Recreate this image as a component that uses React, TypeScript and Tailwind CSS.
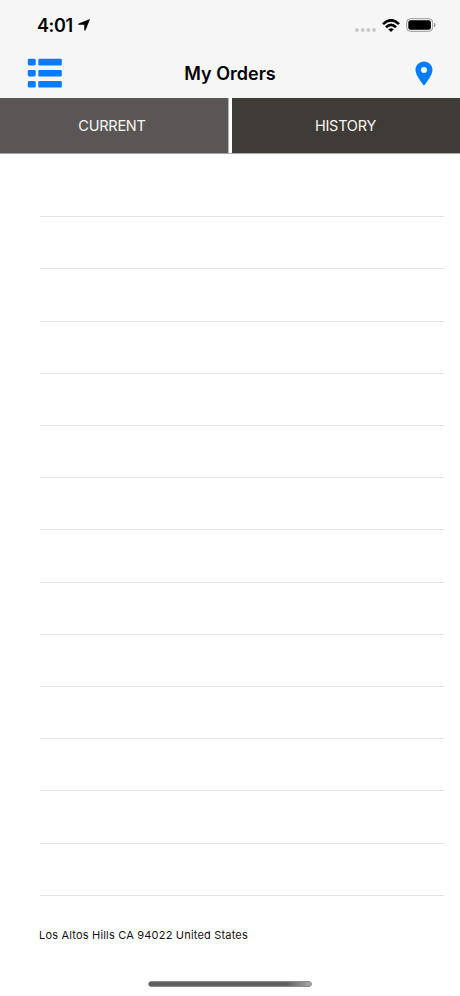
const ROWS = Array.from({ length: 13 }, (_, i) => i);

function StatusBar() {
  return (
    <div className="flex h-[50px] items-center justify-between pl-[37px] pr-6">
      <div className="flex items-center gap-[5px]">
        <span className="pt-[2px] text-[18px] font-semibold leading-[22px] tracking-[-0.4px]">4:01</span>
        <svg className="h-3 w-3" viewBox="0 0 12 12" fill="#000" stroke="#000" strokeWidth="0.5">
          <path d="M11.6.4 7.3 11.2Q6.8 12 6.5 11.1V6Q6.5 5.5 6 5.5H.8Q-.1 5.2.6 4.8Z" />
        </svg>
      </div>
      <div className="flex items-center">
        <svg className="mt-[9px] h-1 w-[21px]" viewBox="0 0 21 4" fill="#c8c7c9">
          <circle cx="2" cy="2" r="1.9" />
          <circle cx="7.7" cy="2" r="1.9" />
          <circle cx="13.3" cy="2" r="1.9" />
          <circle cx="19" cy="2" r="1.9" />
        </svg>
        <svg className="ml-[6px] h-[13px] w-[18px]" viewBox="0 0 18 13" fill="none" stroke="#000" strokeWidth="2.7">
          <path d="M1 5.1Q9-2.6 17 5.1" />
          <path d="M4 8.2Q9 3.5 14 8.2" />
          <path d="M9 13 6.2 10.3Q9 8 11.8 10.3Z" fill="#000" stroke="none" />
        </svg>
        <svg className="ml-[6px] h-[14px] w-[30px]" viewBox="0 0 30 14">
          <rect x="0.7" y="0.7" width="26" height="12.6" rx="3.8" fill="none" stroke="#98979a" />
          <rect x="2.3" y="2.2" width="22.6" height="9.6" rx="2.3" fill="#000" />
          <path d="M28 4.8Q29.6 5.5 29.6 7T28 9.2Z" fill="#98979a" />
        </svg>
      </div>
    </div>
  );
}

function NavBar() {
  return (
    <div className="grid h-[48px] grid-cols-3 items-center">
      <svg className="mb-[2px] ml-[27px] h-[30px] w-[36px]" viewBox="0 0 36 30" fill="#087cff">
        {[0.8, 11.9, 23].map((y) => (
          <g key={y}>
            <rect x="0.8" y={y} width="7.9" height="6.6" rx="1.4" />
            <rect x="11.3" y={y} width="23.5" height="6.6" rx="1.2" />
          </g>
        ))}
      </svg>
      <h1 className="whitespace-nowrap text-center text-[18px] font-semibold leading-6">My Orders</h1>
      <svg className="mb-[2px] mr-[27px] h-[25px] w-[18px] justify-self-end" viewBox="0 0 18 25">
        <path
          fill="#087cff"
          fillRule="evenodd"
          d="M9 .5C4.2.5.5 4.2.5 8.9.5 15 9 24.5 9 24.5S17.5 15 17.5 8.9C17.5 4.2 13.8.5 9 .5ZM9 5.9a3 3 0 1 1 0 6 3 3 0 0 1 0-6Z"
        />
      </svg>
    </div>
  );
}

export default function App() {
  return (
    <div className="flex h-[996px] w-[460px] flex-col overflow-hidden bg-white font-['Inter',sans-serif] text-black">
      <header className="h-[98px] bg-[#f7f6f7]">
        <StatusBar />
        <NavBar />
      </header>
      <div className="flex h-[56px] gap-[3px] border-b border-[#aaa8a7] bg-white text-[14.5px] tracking-[-0.25px] text-[#f8f6f5]">
        <button className="w-[229px] border-r border-[#b5b2b2] bg-[#5b5656] pr-[4px] pt-px">CURRENT</button>
        <button className="w-[228px] bg-[#3f3b37] pr-px pt-px">HISTORY</button>
      </div>
      <main className="ml-[39.5px] mr-[16.5px]">
        <div className="h-[63.3px] border-b border-[#e4e4e4]" />
        {ROWS.map((row) => (
          <div key={row} className="h-[52.2px] border-b border-[#e4e4e4]" />
        ))}
      </main>
      <footer className="flex grow flex-col justify-between pb-[9px] pt-[31px]">
        <p className="pl-[39px] text-[11px] leading-4 tracking-[0.19px] text-[#111]">Los Altos Hills CA 94022 United States</p>
        <div className="ml-[148px] h-[6px] w-[164px] rounded-full border border-[#8c8c8c] bg-linear-to-r from-[#606060] from-85% to-[#aaa]" />
      </footer>
    </div>
  );
}
